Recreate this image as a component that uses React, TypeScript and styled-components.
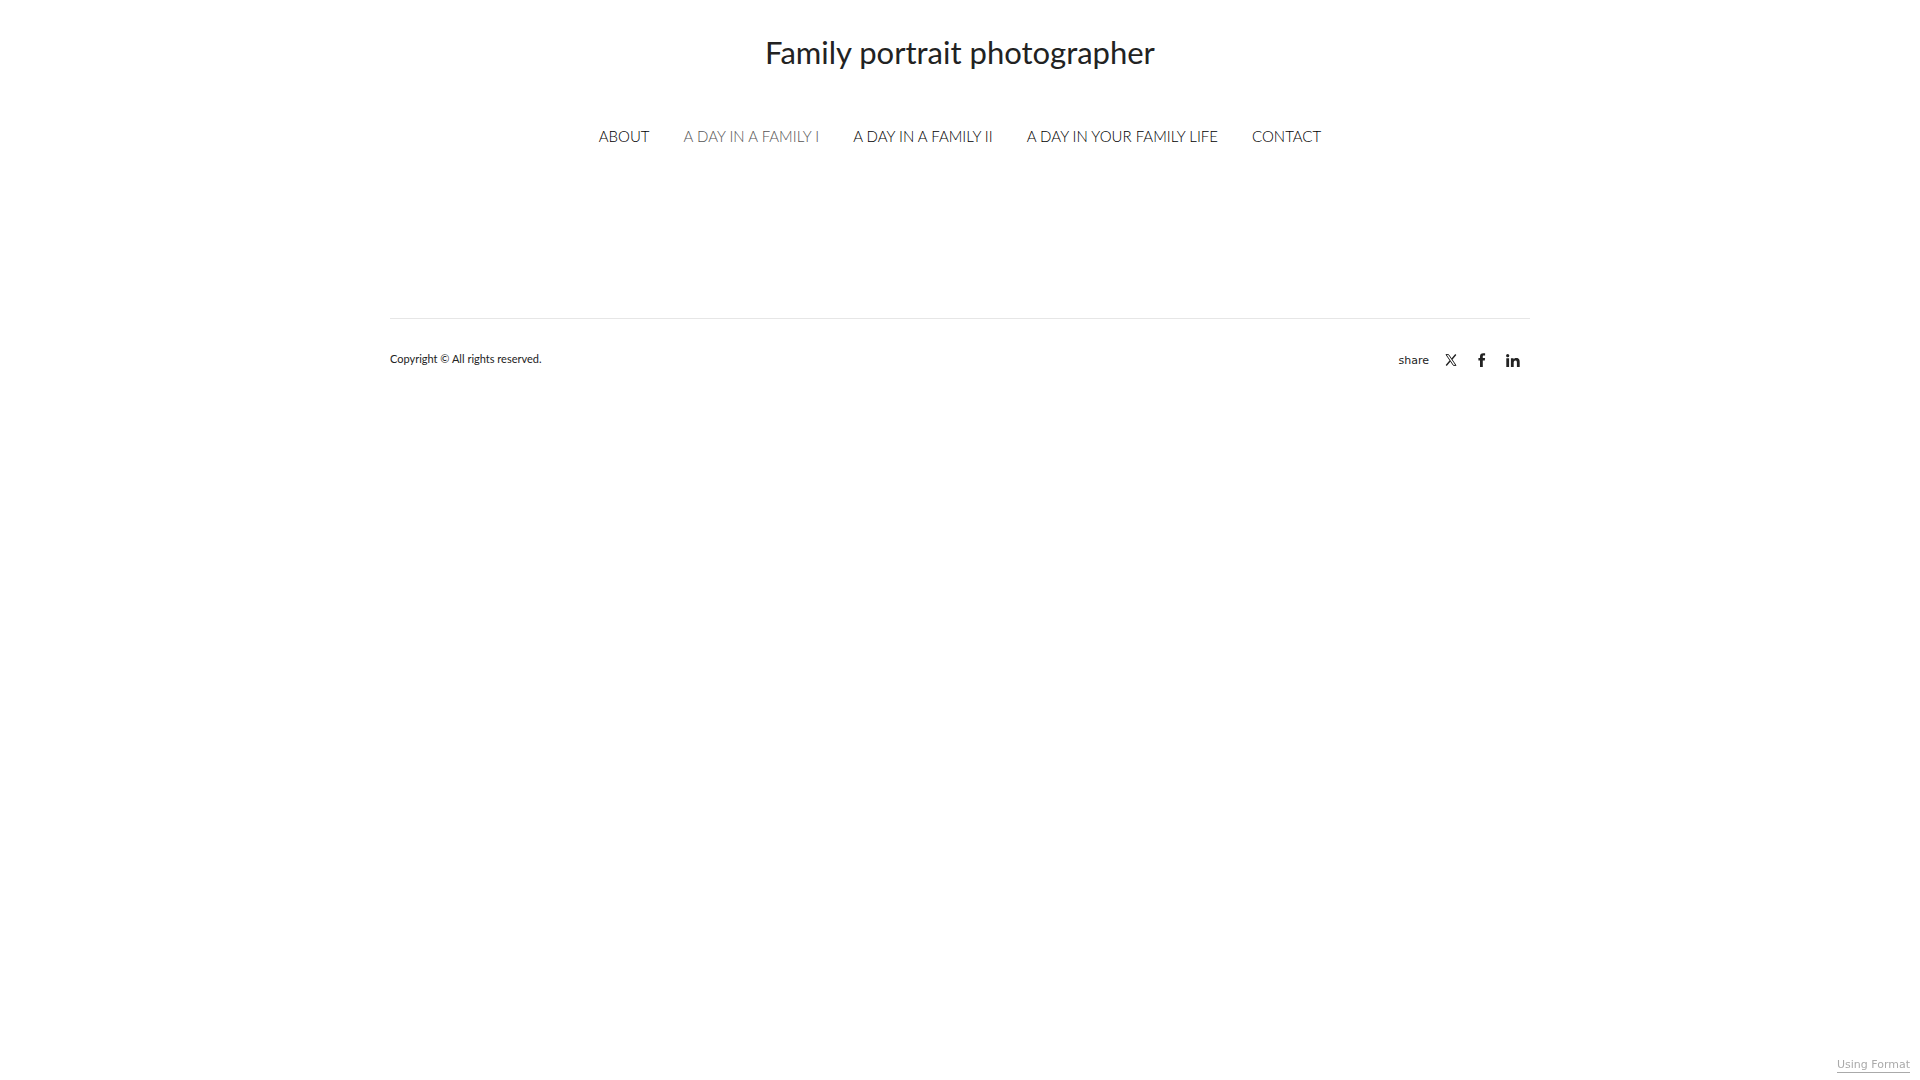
import React from 'react';
import styled, { createGlobalStyle } from 'styled-components';

const GlobalStyle = createGlobalStyle`
  *, *::before, *::after { box-sizing: border-box; }
  body {
    margin: 0;
    background: #fff;
    color: #222;
    font-family: Lato, 'Open Sans', sans-serif;
  }
  a { color: inherit; text-decoration: none; }
`;

const Page = styled.div`
  display: flex;
  flex-direction: column;
  align-items: center;
  min-height: 100vh;
`;

const Header = styled.header`
  display: flex;
  flex-direction: column;
  align-items: center;
  gap: 48px;
  padding: 28px 20px 0;
`;

const Title = styled.h1`
  margin: 0;
  font-size: 31px;
  line-height: 48px;
  font-weight: 400;
`;

const Menu = styled.nav`
  display: flex;
  flex-wrap: wrap;
  justify-content: center;
  column-gap: 34px;
`;

const MenuLink = styled.a<{ $active?: boolean }>`
  font-size: 15px;
  line-height: 24px;
  font-weight: 300;
  text-transform: uppercase;
  color: ${(p) => (p.$active ? '#555' : '#000')};
`;

const Footer = styled.footer`
  display: flex;
  justify-content: space-between;
  align-items: flex-start;
  width: calc(100% - 40px);
  max-width: 1140px;
  margin-top: 170px;
  padding-top: 28px;
  border-top: 1px solid #e6e6e6;
`;

const Copyright = styled.p`
  margin: 0;
  font-size: 11px;
  line-height: 24px;
`;

const Share = styled.div`
  display: flex;
  align-items: center;
  padding-right: 2px;
  font-family: 'DejaVu Sans', sans-serif;
  font-size: 11px;
  line-height: 28px;
`;

const ShareLabel = styled.span`
  margin-right: 6px;
`;

const ShareLink = styled.a`
  display: flex;
  justify-content: center;
  align-items: center;
  width: 31px;
  height: 28px;
  padding-bottom: 2px;
`;

const Credit = styled.a`
  position: fixed;
  right: 10px;
  bottom: 7px;
  border-bottom: 1px solid #aaa;
  color: #aaa;
  font-family: 'DejaVu Sans', sans-serif;
  font-size: 11px;
  line-height: 14px;
`;

const pages = [
  { label: 'About' },
  { label: 'A day in a family I', active: true },
  { label: 'A day in a family II' },
  { label: 'A day in your family life' },
  { label: 'Contact' },
];

const XIcon = () => (
  <svg width="12" height="12" viewBox="0 0 12 12" fill="none" stroke="#222" aria-hidden="true">
    <path d="M1 .6h2.6L11 11.4H8.4z" />
    <path d="M10.8 .5 6.8 5.2M5.2 6.8 1.2 11.5" strokeWidth="1.4" />
  </svg>
);

const FacebookIcon = () => (
  <svg width="8" height="14" viewBox="0 0 8 14" fill="#222" aria-hidden="true">
    <path d="M2 14V7.4H.4V5H2V3.4C2 1.2 3.2 .2 5.2 .2c.9 0 1.6 .1 1.9 .1v2.3H5.9c-1 0-1.1 .5-1.1 1.2V5h2.3l-.3 2.4h-2V14z" />
  </svg>
);

const LinkedInIcon = () => (
  <svg width="14" height="13" viewBox="0 0 14 13" fill="#222" aria-hidden="true">
    <circle cx="1.7" cy="1.7" r="1.6" />
    <path d="M.3 4.3h2.8V13H.3zM4.9 4.3h2.7v1.2c.4-.8 1.3-1.4 2.7-1.4 2.8 0 3.4 1.8 3.4 4.2V13h-2.8V8.8c0-1 0-2.3-1.4-2.3S7.7 7.6 7.7 8.7V13H4.9z" />
  </svg>
);

export default function App() {
  return (
    <Page>
      <GlobalStyle />
      <Header>
        <Title><a href="#home">Family portrait photographer</a></Title>
        <Menu>
          {pages.map((page) => (
            <MenuLink
              key={page.label}
              href="#page"
              $active={page.active}
              aria-current={page.active ? 'page' : undefined}
            >
              {page.label}
            </MenuLink>
          ))}
        </Menu>
      </Header>
      <Footer>
        <Copyright>Copyright © All rights reserved.</Copyright>
        <Share>
          <ShareLabel>share</ShareLabel>
          <ShareLink href="#x" aria-label="Share on X"><XIcon /></ShareLink>
          <ShareLink href="#facebook" aria-label="Share on Facebook"><FacebookIcon /></ShareLink>
          <ShareLink href="#linkedin" aria-label="Share on LinkedIn"><LinkedInIcon /></ShareLink>
        </Share>
      </Footer>
      <Credit href="#format">Using Format</Credit>
    </Page>
  );
}
